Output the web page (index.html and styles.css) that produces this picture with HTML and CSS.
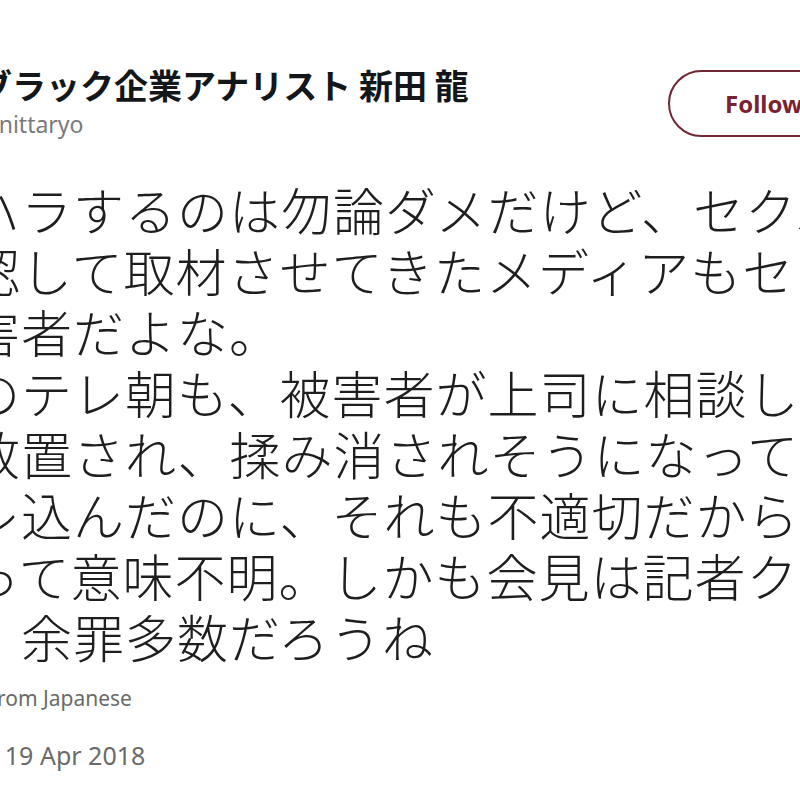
FILE: index.html
```html
<!DOCTYPE html>
<html lang="ja">
<head>
<meta charset="utf-8">
<title>Tweet</title>
<link rel="stylesheet" href="styles.css">
</head>
<body>
<div class="page">
  <header class="head">
    <div class="who">
      <div class="name">ブラック企業アナリスト 新田 龍</div>
      <div class="handle">@nittaryo</div>
    </div>
    <button class="follow">Follow</button>
  </header>
  <div class="text">
    <div class="line">ハラするのは勿論ダメだけど、セクハラを黙</div>
    <div class="line">認して取材させてきたメディアもセクハラ加</div>
    <div class="line">害者だよな。</div>
    <div class="line">のテレ朝も、被害者が上司に相談しても</div>
    <div class="line">放置され、揉み消されそうになって週刊誌に</div>
    <div class="line">レ込んだのに、それも不適切だからと処分</div>
    <div class="line">って意味不明。しかも会見は記者クラブ限定</div>
    <div class="line">。余罪多数だろうね</div>
  </div>
  <div class="translated">Translated from Japanese</div>
  <div class="date">7:30 AM - 19 Apr 2018</div>
</div>
</body>
</html>
```
FILE: styles.css
```css
html, body {
  margin: 0;
  padding: 0;
  background: #ffffff;
  overflow: hidden;
}
.page {
  width: 800px;
  height: 800px;
  overflow: hidden;
  font-family: "Noto Sans", "Noto Sans CJK JP", sans-serif;
}
.head {
  display: flex;
  align-items: center;
  margin: 64px -68px 0 -22px;
}
.who {
  display: flex;
  flex-direction: column;
}
.name {
  font-family: "Noto Sans CJK JP", sans-serif;
  font-weight: 700;
  font-size: 34px;
  line-height: 42px;
  color: #14171a;
  white-space: nowrap;
}
.handle {
  font-size: 23px;
  line-height: 36px;
  color: #7a7a7a;
}
.follow {
  margin-left: auto;
  width: 200px;
  height: 67px;
  box-sizing: border-box;
  border: 2px solid #6e2833;
  border-radius: 34px;
  background: #ffffff;
  padding: 0 0 0 55px;
  text-align: left;
  font-family: "Noto Sans", sans-serif;
  font-weight: 700;
  font-size: 24px;
  color: #7a2232;
}
.text {
  margin: 37px 0 0 -31px;
  font-family: "Noto Sans CJK JP", sans-serif;
  font-weight: 300;
  font-size: 51px;
  letter-spacing: 1px;
  line-height: 61px;
  color: #1e1e1e;
}
.line {
  white-space: nowrap;
}
.translated {
  margin: 17px 0 0 -119px;
  font-size: 21px;
  line-height: 28px;
  color: #6a6a6a;
  white-space: nowrap;
}
.date {
  margin: 27px 0 0 -111px;
  font-size: 25px;
  line-height: 32px;
  color: #6a6a6a;
  white-space: nowrap;
}
```
